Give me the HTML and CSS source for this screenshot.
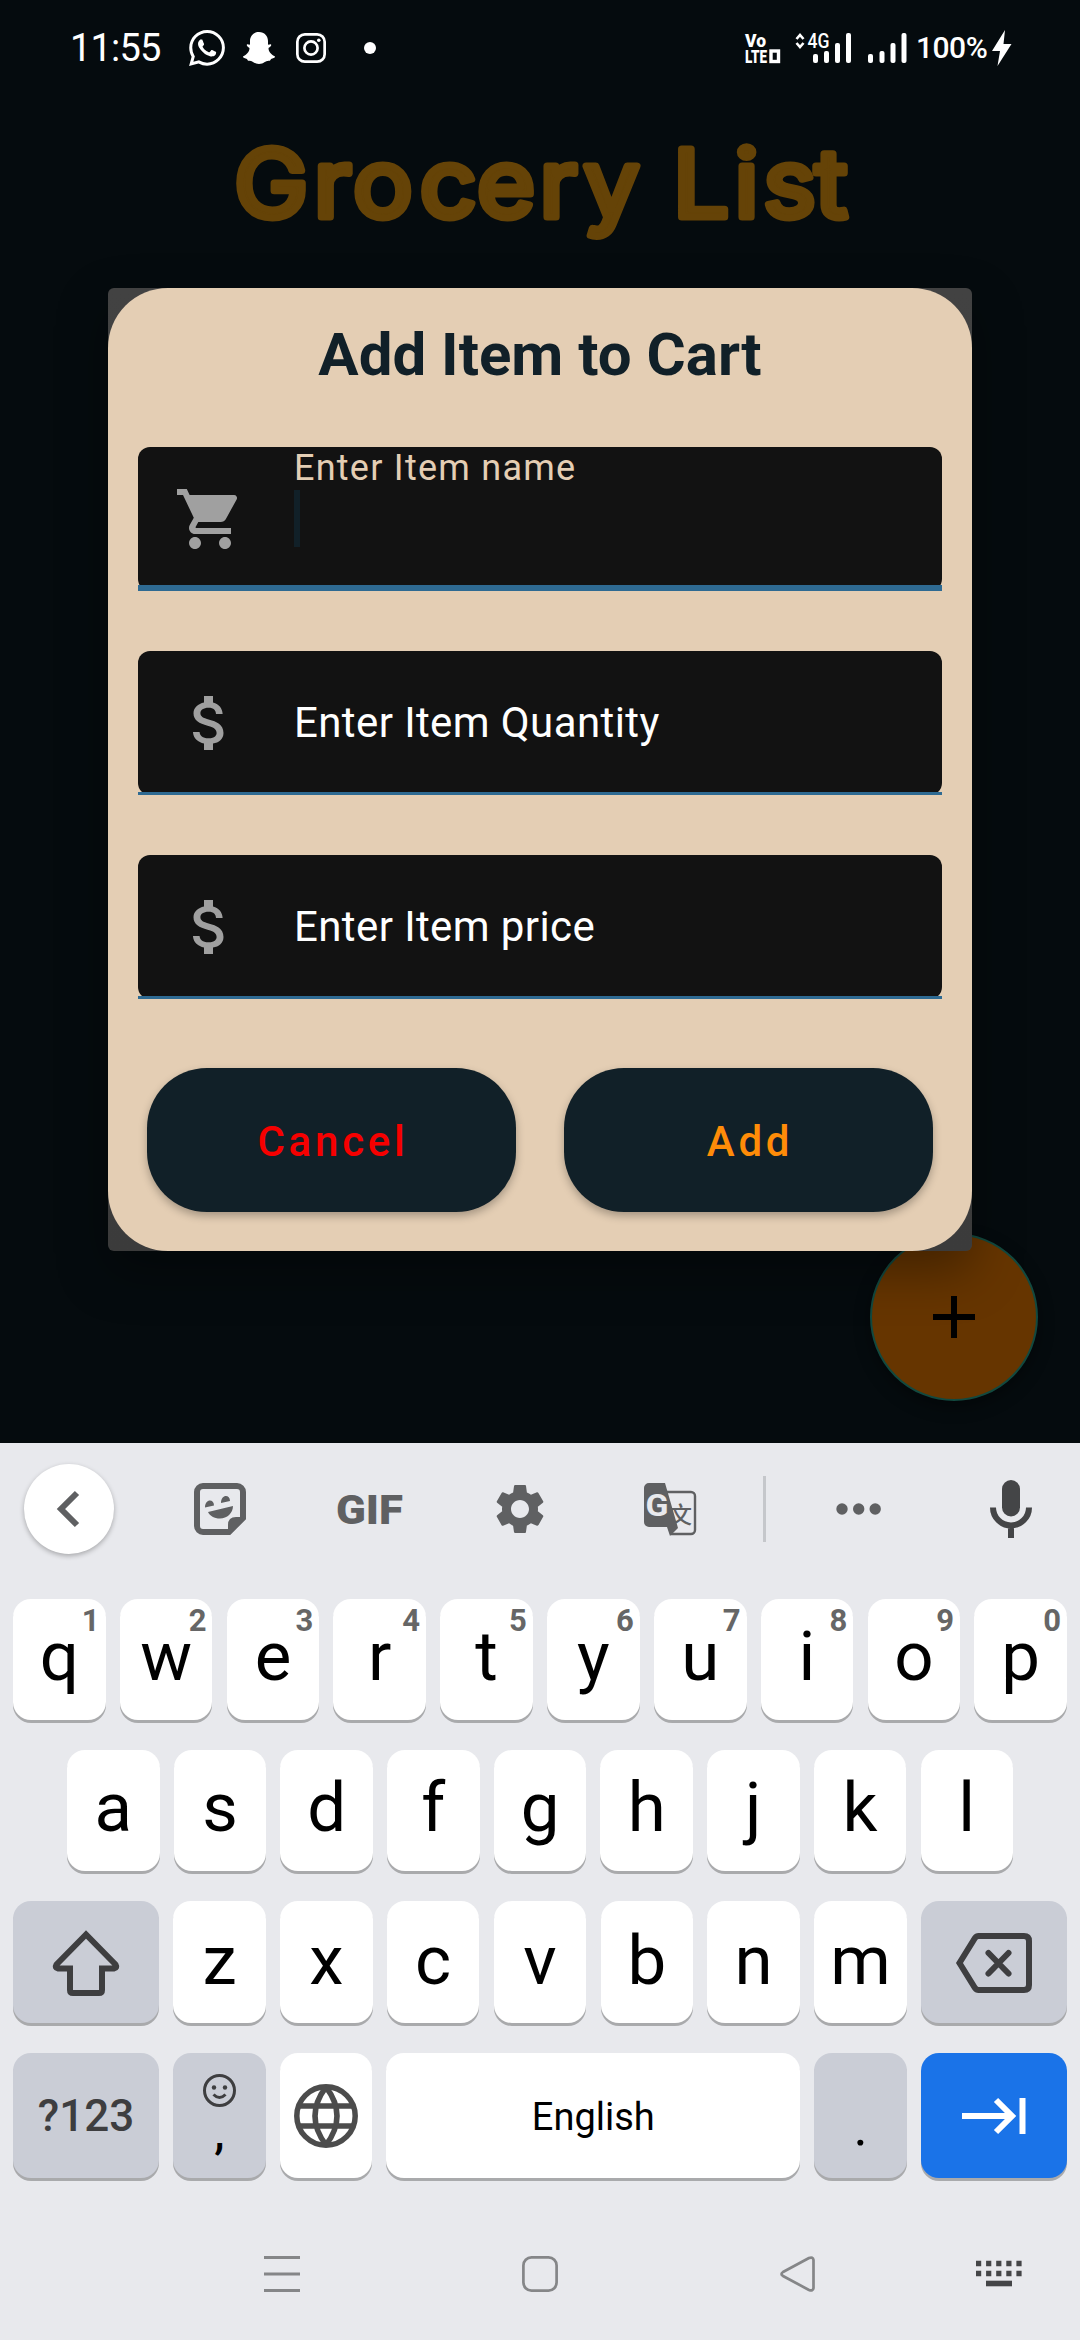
FILE: index.html
```html
<!DOCTYPE html>
<html lang="en">
<head>
<meta charset="utf-8">
<title>Grocery List</title>
<link rel="stylesheet" href="styles.css">
</head>
<body>
<div class="screen">
  <main class="app">
    <header class="status">
      <div class="status-left">
        <span class="clock">11:55</span>
        <svg class="ic-wa" width="36" height="36" viewBox="0 0 24 24" fill="#fff"><path d="M17.472 14.382c-.297-.149-1.758-.867-2.03-.967-.273-.099-.471-.148-.67.15-.197.297-.767.966-.94 1.164-.173.199-.347.223-.644.075-.297-.15-1.255-.463-2.39-1.475-.883-.788-1.48-1.761-1.653-2.059-.173-.297-.018-.458.13-.606.134-.133.298-.347.446-.52.149-.174.198-.298.298-.497.099-.198.05-.371-.025-.52-.075-.149-.669-1.612-.916-2.207-.242-.579-.487-.5-.669-.51-.173-.008-.371-.01-.57-.01-.198 0-.52.074-.792.372-.272.297-1.04 1.016-1.04 2.479 0 1.462 1.065 2.875 1.213 3.074.149.198 2.096 3.2 5.077 4.487.709.306 1.262.489 1.694.625.712.227 1.36.195 1.871.118.571-.085 1.758-.719 2.006-1.413.248-.694.248-1.289.173-1.413-.074-.124-.272-.198-.57-.347M12.050 21.785h-.004a9.870 9.870 0 01-5.031-1.378l-.361-.214-3.741.982.998-3.648-.235-.374a9.860 9.860 0 01-1.510-5.260c.001-5.450 4.436-9.884 9.888-9.884 2.640 0 5.122 1.030 6.988 2.898a9.825 9.825 0 012.893 6.994c-.003 5.450-4.437 9.884-9.885 9.884m8.413-18.297A11.815 11.815 0 0012.050 0C5.495 0 .160 5.335.157 11.892c0 2.096.547 4.142 1.588 5.945L.057 24l6.305-1.654a11.882 11.882 0 005.683 1.448h.005c6.554 0 11.890-5.335 11.893-11.893a11.821 11.821 0 00-3.480-8.413z"/></svg>
        <svg class="ic-snap" width="34" height="32" viewBox="0 0 34 32" fill="#fff"><path d="M17 0c5.500 0 9 4 9 9v3.500c1 .500 2-.500 3 0 .800.600-.500 2.500-2.500 3.500 0 4 3 6.500 6.500 8.500.500 1-2 2-4 2.500-.500 1.200-.700 1.800-2 1.800-3.500-.300-5 3.200-10 3.200s-6.500-3.500-10-3.200c-1.300 0-1.500-.600-2-1.800-2-.500-4.500-1.500-4-2.500 3.500-2 6.500-4.500 6.500-8.500-2-1-3.300-2.900-2.500-3.500 1-.500 2 .500 3 0V9c0-5 3.500-9 9-9z"/></svg>
        <svg class="ic-ig" width="30" height="30" viewBox="0 0 30 30" fill="none" stroke="#fff" stroke-width="2.700"><rect x="1.350" y="1.350" width="27.300" height="27.300" rx="7.500"/><circle cx="15" cy="15" r="6.600"/><circle cx="22.800" cy="7.200" r="1.800" fill="#fff" stroke="none"/></svg>
        <i class="more-dot"></i>
      </div>
      <div class="status-right">
        <svg width="36" height="32" viewBox="0 0 36 32" fill="#fff" font-family="Roboto, sans-serif" font-weight="900"><text x="0" y="15" font-size="19" textLength="21" lengthAdjust="spacingAndGlyphs">Vo</text><text x="0" y="31" font-size="19" textLength="22" lengthAdjust="spacingAndGlyphs">LTE</text><rect x="26" y="19" width="7.500" height="10.500" fill="none" stroke="#fff" stroke-width="3.400"/></svg>
        <svg class="ic-net" width="58" height="32" viewBox="0 0 58 32" fill="#fff"><path d="M1.500 7 5 3l3.500 4M1.500 11 5 15l3.500-4" fill="none" stroke="#fff" stroke-width="2.600"/><text x="12.500" y="16" font-family="Roboto, sans-serif" font-size="21" font-weight="500" textLength="22" lengthAdjust="spacingAndGlyphs">4G</text><rect x="18" y="22" width="5" height="9" rx="2"/><rect x="29" y="19" width="5" height="12" rx="2"/><rect x="40" y="11" width="5" height="20" rx="2"/><rect x="51" y="1" width="5" height="30" rx="2"/></svg>
        <svg class="ic-bars" width="40" height="32" viewBox="0 0 40 32" fill="#fff"><rect x="0" y="22" width="5" height="9" rx="2"/><rect x="11.500" y="19" width="5" height="12" rx="2"/><rect x="22.500" y="11" width="5" height="20" rx="2"/><rect x="33.500" y="1" width="5" height="30" rx="2"/></svg>
        <span class="battery">100%</span>
        <svg class="ic-bolt" width="20" height="36" viewBox="0 0 20 36" fill="#fff"><path d="M13 0 0 21h8L5.500 36 19.500 14h-8z"/></svg>
      </div>
    </header>

    <svg class="app-title" width="1080" height="120" viewBox="0 0 1080 120" role="heading"><text transform="scale(1.06 1)" y="85" x="220.700 296 333 396 450 509 550.500 600 635 693 720 769">Grocery List</text></svg>

    <section class="dialog">
      <div class="sheet">
        <h2>Add Item to Cart</h2>
        <div class="field focused">
          <svg width="72" height="72" viewBox="0 0 24 24" fill="#a0a0a0"><path d="M7 18c-1.100 0-1.990.900-1.990 2S5.900 22 7 22s2-.900 2-2-.900-2-2-2zM1 2v2h2l3.600 7.590-1.350 2.450c-.160.280-.250.610-.250.960 0 1.100.900 2 2 2h12v-2H7.420c-.140 0-.250-.110-.250-.250l.030-.120.900-1.630h7.450c.750 0 1.410-.410 1.750-1.030l3.580-6.490A1.003 1.003 0 0020 4H5.210l-.940-2H1zm16 16c-1.100 0-1.990.900-1.990 2s.890 2 1.990 2 2-.900 2-2-.900-2-2-2z"/></svg>
          <div class="entry"><span class="float">Enter Item name</span><i class="caret"></i></div>
        </div>
        <div class="field">
          <svg width="72" height="72" viewBox="0 0 24 24" fill="#a0a0a0"><path d="M11.800 10.900c-2.270-.590-3-1.200-3-2.150 0-1.090 1.010-1.850 2.700-1.850 1.780 0 2.440.850 2.500 2.100h2.210c-.070-1.720-1.120-3.300-3.210-3.810V3h-3v2.160c-1.940.420-3.500 1.680-3.500 3.610 0 2.310 1.910 3.460 4.700 4.130 2.500.600 3 1.480 3 2.410 0 .690-.490 1.790-2.700 1.790-2.060 0-2.870-.920-2.980-2.100h-2.200c.120 2.190 1.760 3.420 3.680 3.830V21h3v-2.150c1.950-.370 3.500-1.500 3.500-3.550 0-2.840-2.430-3.810-4.700-4.400z"/></svg>
          <span class="hint">Enter Item Quantity</span>
        </div>
        <div class="field">
          <svg width="72" height="72" viewBox="0 0 24 24" fill="#a0a0a0"><path d="M11.800 10.900c-2.270-.590-3-1.200-3-2.150 0-1.090 1.010-1.850 2.700-1.850 1.780 0 2.440.850 2.500 2.100h2.210c-.070-1.720-1.120-3.300-3.210-3.810V3h-3v2.160c-1.940.420-3.500 1.680-3.500 3.610 0 2.310 1.910 3.460 4.700 4.130 2.500.600 3 1.480 3 2.410 0 .690-.490 1.790-2.700 1.790-2.060 0-2.870-.920-2.980-2.100h-2.200c.120 2.190 1.760 3.420 3.680 3.830V21h3v-2.150c1.950-.370 3.500-1.500 3.500-3.550 0-2.840-2.430-3.810-4.700-4.400z"/></svg>
          <span class="hint">Enter Item price</span>
        </div>
        <div class="actions">
          <button class="btn cancel">Cancel</button>
          <button class="btn add">Add</button>
        </div>
      </div>
    </section>

    <div class="fab"><svg width="42" height="42" viewBox="0 0 42 42"><path d="M0 21h42M21 0v42" stroke="#000" stroke-width="6"/></svg></div>
  </main>

  <section class="keyboard">
    <div class="tools">
      <span class="back"><svg width="24" height="38" viewBox="0 0 24 38" fill="none" stroke="#5f6062" stroke-width="6"><path d="M21 3 5 19l16 16"/></svg></span>
      <svg class="t-sticker" width="52" height="52" viewBox="0 0 52 52" fill="#5f6062"><path d="M9 3h34a6 6 0 0 1 6 6v26L35 49H9a6 6 0 0 1-6-6V9a6 6 0 0 1 6-6z" fill="none" stroke="#5f6062" stroke-width="6"/><path d="M34 50V42q0-8 8-8h8zM14 29l25-6c0 7-6 12.500-13 12.500C20 35.500 16 33 14 29zM11 24.500c0-9 9-9 9-2zM27 20c0-9 9-9 9-2z"/></svg>
      <svg class="t-gif" width="68" height="32" viewBox="0 0 68 32" fill="#5f6062"><text x="0" y="30.500" font-family="Roboto, sans-serif" font-size="40" font-weight="900" textLength="67" lengthAdjust="spacingAndGlyphs">GIF</text></svg>
      <svg class="t-gear" width="60" height="60" viewBox="0 0 24 24" fill="#5f6062"><path d="M19.140 12.940c.040-.300.060-.610.060-.940 0-.320-.020-.640-.070-.940l2.030-1.580c.180-.140.230-.410.120-.610l-1.920-3.320c-.120-.220-.370-.290-.590-.220l-2.390.960c-.500-.380-1.030-.700-1.620-.940l-.360-2.540c-.040-.240-.240-.410-.480-.410h-3.840c-.240 0-.430.170-.470.410l-.360 2.540c-.590.240-1.130.570-1.620.940l-2.390-.960c-.220-.080-.470 0-.590.220L2.740 8.870c-.120.210-.080.470.120.610l2.030 1.580c-.050.300-.090.630-.090.940s.020.640.070.940l-2.030 1.580c-.180.140-.230.410-.120.610l1.920 3.320c.120.220.370.290.590.220l2.390-.960c.500.380 1.030.700 1.620.940l.360 2.540c.050.240.240.410.480.410h3.840c.240 0 .440-.170.470-.410l.360-2.540c.590-.240 1.130-.560 1.620-.940l2.390.960c.220.080.470 0 .590-.220l1.920-3.320c.120-.220.070-.470-.120-.610l-2.010-1.580zM12 15.600c-1.980 0-3.600-1.620-3.600-3.600s1.620-3.600 3.600-3.600 3.600 1.620 3.600 3.600-1.620 3.600-3.600 3.600z"/></svg>
      <svg class="t-trans" width="53" height="53" viewBox="0 0 53 53"><path d="M23 9h24a4 4 0 0 1 4 4v34a4 4 0 0 1-4 4H27" fill="none" stroke="#5f6062" stroke-width="2.400"/><text x="25" y="40" font-family="'Noto Sans CJK SC', sans-serif" font-size="23" font-weight="500" fill="#5f6062">文</text><path d="M5 0h16l11 38 2 7-8 8-3-9H5a5 5 0 0 1-5-5V5a5 5 0 0 1 5-5z" fill="#5f6062"/><text x="1.500" y="33" font-family="Roboto, sans-serif" font-size="31" font-weight="700" fill="#e8e9ed" textLength="23" lengthAdjust="spacingAndGlyphs">G</text></svg>
      <i class="divider"></i>
      <svg class="t-more" width="46" height="12" viewBox="0 0 46 12" fill="#5f6062"><circle cx="6" cy="6" r="5.700"/><circle cx="22.700" cy="6" r="5.700"/><circle cx="39.200" cy="6" r="5.700"/></svg>
      <svg class="t-mic" width="42" height="58" viewBox="0 0 42 58" fill="none"><rect x="12" y="0" width="18" height="36.500" rx="9" fill="#444547"/><path d="M3 27.500a18 18 0 0 0 36 0M21 45v13" stroke="#444547" stroke-width="6"/></svg>
    </div>

    <div class="row r1">
      <span class="key">q<sup>1</sup></span><span class="key">w<sup>2</sup></span><span class="key">e<sup>3</sup></span><span class="key">r<sup>4</sup></span><span class="key">t<sup>5</sup></span><span class="key">y<sup>6</sup></span><span class="key">u<sup>7</sup></span><span class="key">i<sup>8</sup></span><span class="key">o<sup>9</sup></span><span class="key">p<sup>0</sup></span>
    </div>
    <div class="row r2">
      <span class="key">a</span><span class="key">s</span><span class="key">d</span><span class="key">f</span><span class="key">g</span><span class="key">h</span><span class="key">j</span><span class="key">k</span><span class="key">l</span>
    </div>
    <div class="row r3">
      <span class="key wide dim"><svg width="68" height="66" viewBox="0 0 68 66" fill="none" stroke="#3e3e40" stroke-width="6"><path d="M34 4.500 4.500 34.500q-2 3.500 1.500 4H18V60q0 3 3 3h26q3 0 3-3V38.500h12q3.500-.500 1.500-4z"/></svg></span>
      <span class="key">z</span><span class="key">x</span><span class="key">c</span><span class="key">v</span><span class="key">b</span><span class="key">n</span><span class="key">m</span>
      <span class="key wide dim"><svg width="76" height="60" viewBox="0 0 76 60" fill="none" stroke="#3e3e40" stroke-width="6"><path d="M22.500 3H68q5 0 5 5v44q0 5-5 5H22.500q-2 0-3.500-2L3.500 30 19 5q1.500-2 3.500-2z"/><path d="m32.500 20 20 20.500m0-20.500-20 20.500" stroke-linecap="round"/></svg></span>
    </div>
    <div class="row r4">
      <span class="key wide dim sym">?123</span>
      <span class="key dim comma"><svg width="33" height="33" viewBox="0 0 33 33" fill="none" stroke="#3e3e40" stroke-width="3"><circle cx="16.500" cy="16.500" r="15"/><path d="M10.500 20.500q6 6 12 0"/><circle cx="11" cy="13.500" r="2.200" fill="#3e3e40" stroke="none"/><circle cx="22" cy="13.500" r="2.200" fill="#3e3e40" stroke="none"/></svg><b>,</b></span>
      <span class="key globe"><svg width="64" height="64" viewBox="0 0 64 64" fill="none" stroke="#4c4c4c" stroke-width="5.500"><circle cx="32" cy="32" r="29.200"/><path d="M4 22h56M4 42h56M32 3q-22 29 0 58M32 3q22 29 0 58"/></svg></span>
      <span class="key space">English</span>
      <span class="key dim dot">.</span>
      <span class="key wide enter"><svg width="64" height="38" viewBox="0 0 64 38" fill="none" stroke="#fff" stroke-width="6"><path d="M0 19h50M34 3l16 16-16 16M60.500 1v36"/></svg></span>
    </div>

    <nav class="nav">
      <svg width="36" height="36" viewBox="0 0 36 36" stroke="#858688" stroke-width="3"><path d="M0 1.500h36M0 18h36M0 34.500h36"/></svg>
      <svg class="n-home" width="36" height="36" viewBox="0 0 36 36" fill="none" stroke="#858688" stroke-width="2.700"><rect x="1.400" y="1.400" width="33.200" height="33.200" rx="8"/></svg>
      <svg class="n-back" width="36" height="36" viewBox="0 0 36 36" fill="none" stroke="#858688" stroke-width="2.700" stroke-linejoin="round"><path d="M3 16 29 2q4-1.500 4.500 2v28q-.500 3.500-4.500 2L3 20q-3-2 0-4z"/></svg>
      <svg class="n-kb" width="46" height="28" viewBox="0 0 46 28" stroke="#444547" stroke-width="5.600"><path d="M0 3.500h46M0 13.500h46" stroke-dasharray="5.200 4.900"/><path d="M10 23.500h26"/></svg>
    </nav>
  </section>
</div>
</body>
</html>
```
FILE: styles.css
```css
* { box-sizing: border-box; }
body { margin: 0; background: #050a0d; font-family: Roboto, "Liberation Sans", sans-serif; }
svg { display: block; flex: none; overflow: visible; }
.screen { width: 1080px; height: 2340px; display: flex; flex-direction: column; overflow: hidden; }

.app { position: relative; height: 1443px; background: #050b0e; overflow: hidden; display: flex; flex-direction: column; align-items: center; }
.status { width: 100%; height: 96px; padding: 0 68px 0 70px; display: flex; justify-content: space-between; align-items: center; color: #fff; }
.status-left, .status-right { display: flex; align-items: center; }
.clock { width: 119px; font-size: 38px; line-height: 44px; letter-spacing: -0.8px; }
.ic-snap { margin-left: 17px; }
.ic-ig { margin-left: 20px; }
.more-dot { width: 12px; height: 12px; margin-left: 38px; border-radius: 50%; background: #fff; }
.ic-net { margin-left: 14px; }
.ic-bars { margin-left: 15px; }
.battery { width: 71px; margin: 0 5px 0 8px; font-size: 30px; line-height: 36px; font-weight: 500; letter-spacing: -.5px; white-space: nowrap; }

.app-title { height: 120px; margin-top: 36px; }
.app-title text { font-family: Inter, sans-serif; font-size: 94px; font-weight: 400; fill: #654307; stroke: #654307; stroke-width: 7px; stroke-linejoin: round; }

.dialog { position: relative; z-index: 2; width: 864px; height: 963px; margin-top: 36px; border-radius: 6px; background: linear-gradient(#424242, #3b3b3b); box-shadow: 0 20px 50px rgba(0, 0, 0, .35); }
.sheet { height: 100%; padding: 0 30px; border-radius: 60px; background: #e4ceb4; }
.sheet h2 { margin: 0; padding-top: 31px; height: 159px; font-size: 60px; line-height: 72px; font-weight: 700; text-align: center; color: #112028; }
.field { position: relative; height: 144px; margin-bottom: 60px; padding: 0 36px; display: flex; align-items: center; border-radius: 12px; background: #121212; }
.field::after { content: ""; position: absolute; left: 0; right: 0; bottom: 0; height: 3px; background: #2e6a92; }
.field.focused::after { height: 6px; }
.hint { margin-left: 48px; font-size: 42px; line-height: 50px; letter-spacing: .4px; color: #fff; }
.entry { align-self: stretch; margin-left: 48px; display: flex; flex-direction: column; }
.float { font-size: 36px; line-height: 42px; letter-spacing: 1.25px; color: #e4ceb4; }
.caret { width: 6px; height: 57px; margin-top: 1px; background: #112028; }
.actions { display: flex; gap: 48px; padding: 9px 9px 0; }
.btn { flex: 1; height: 144px; padding: 4px 0 0 3px; border: 0; border-radius: 60px; background: #112028; font: 500 42px/50px Roboto, sans-serif; letter-spacing: 3.75px; box-shadow: 0 4px 9px rgba(0, 0, 0, .28); }
.cancel { color: #f60000; }
.add { color: #ff8c08; }
.fab { position: absolute; left: 870px; top: 1233px; width: 168px; height: 168px; display: flex; align-items: center; justify-content: center; border: 2px solid #12493f; border-radius: 50%; background: #663500; box-shadow: 0 6px 16px rgba(0, 0, 0, .4); }

.keyboard { height: 897px; background: #e8e9ed; }
.tools { height: 132px; padding-left: 24px; display: flex; align-items: center; }
.back { width: 90px; height: 90px; padding-right: 2px; display: flex; align-items: center; justify-content: center; border-radius: 50%; background: #fff; box-shadow: 0 2px 5px rgba(0, 0, 0, .28); }
.t-sticker { margin-left: 80px; }
.t-gif { margin-left: 90px; }
.t-gear { margin-left: 86px; }
.t-trans { margin-left: 94px; }
.divider { width: 3px; height: 66px; margin-left: 66px; background: #c5c7cb; }
.t-more { margin-left: 70px; }
.t-mic { margin-left: 108px; }

.row { display: flex; gap: 14.2px; padding: 0 13px; }
.r1 { margin-top: 24px; }
.r2 { margin-top: 30px; padding: 0 67px; }
.r3 { margin-top: 30px; }
.r4 { margin-top: 30px; }
.key { position: relative; flex: 1 1 0; height: 121px; padding-bottom: 6px; display: flex; align-items: center; justify-content: center; border-radius: 18px; background: #fff; box-shadow: 0 3px 0 #a9aaac; font-size: 69px; line-height: 80px; color: #000; }
.r3 .key { height: 122px; padding-bottom: 2px; }
.r4 .key { height: 125px; padding-bottom: 0; }
.key.wide { flex: 0 0 146px; }
.key.dim { background: #cacdd6; }
.key sup { position: absolute; top: 4px; right: 6px; font-size: 31px; line-height: 36px; font-weight: 700; color: #666; }
.r3 .wide svg { margin-top: 4px; }
.r4 .comma, .r4 .dot, .r4 .globe { flex: 0 0 92.400px; }
.r4 .sym { font-size: 44px; font-weight: 500; color: #3e3e40; }
.r4 .comma { flex-direction: column; justify-content: flex-start; padding-top: 21px; }
.comma b { font-size: 46px; line-height: 50px; font-weight: 500; }
.r4 .dot { padding-top: 22px; font-size: 54px; }
.r4 .space { font-size: 38px; padding-top: 3px; }
.r4 .enter { background: #1a73e8; }

.nav { display: flex; align-items: center; height: 36px; margin-top: 78px; padding-left: 264px; }
.n-home { margin-left: 222px; }
.n-back { margin-left: 222px; }
.n-kb { margin-left: 160px; }
```
